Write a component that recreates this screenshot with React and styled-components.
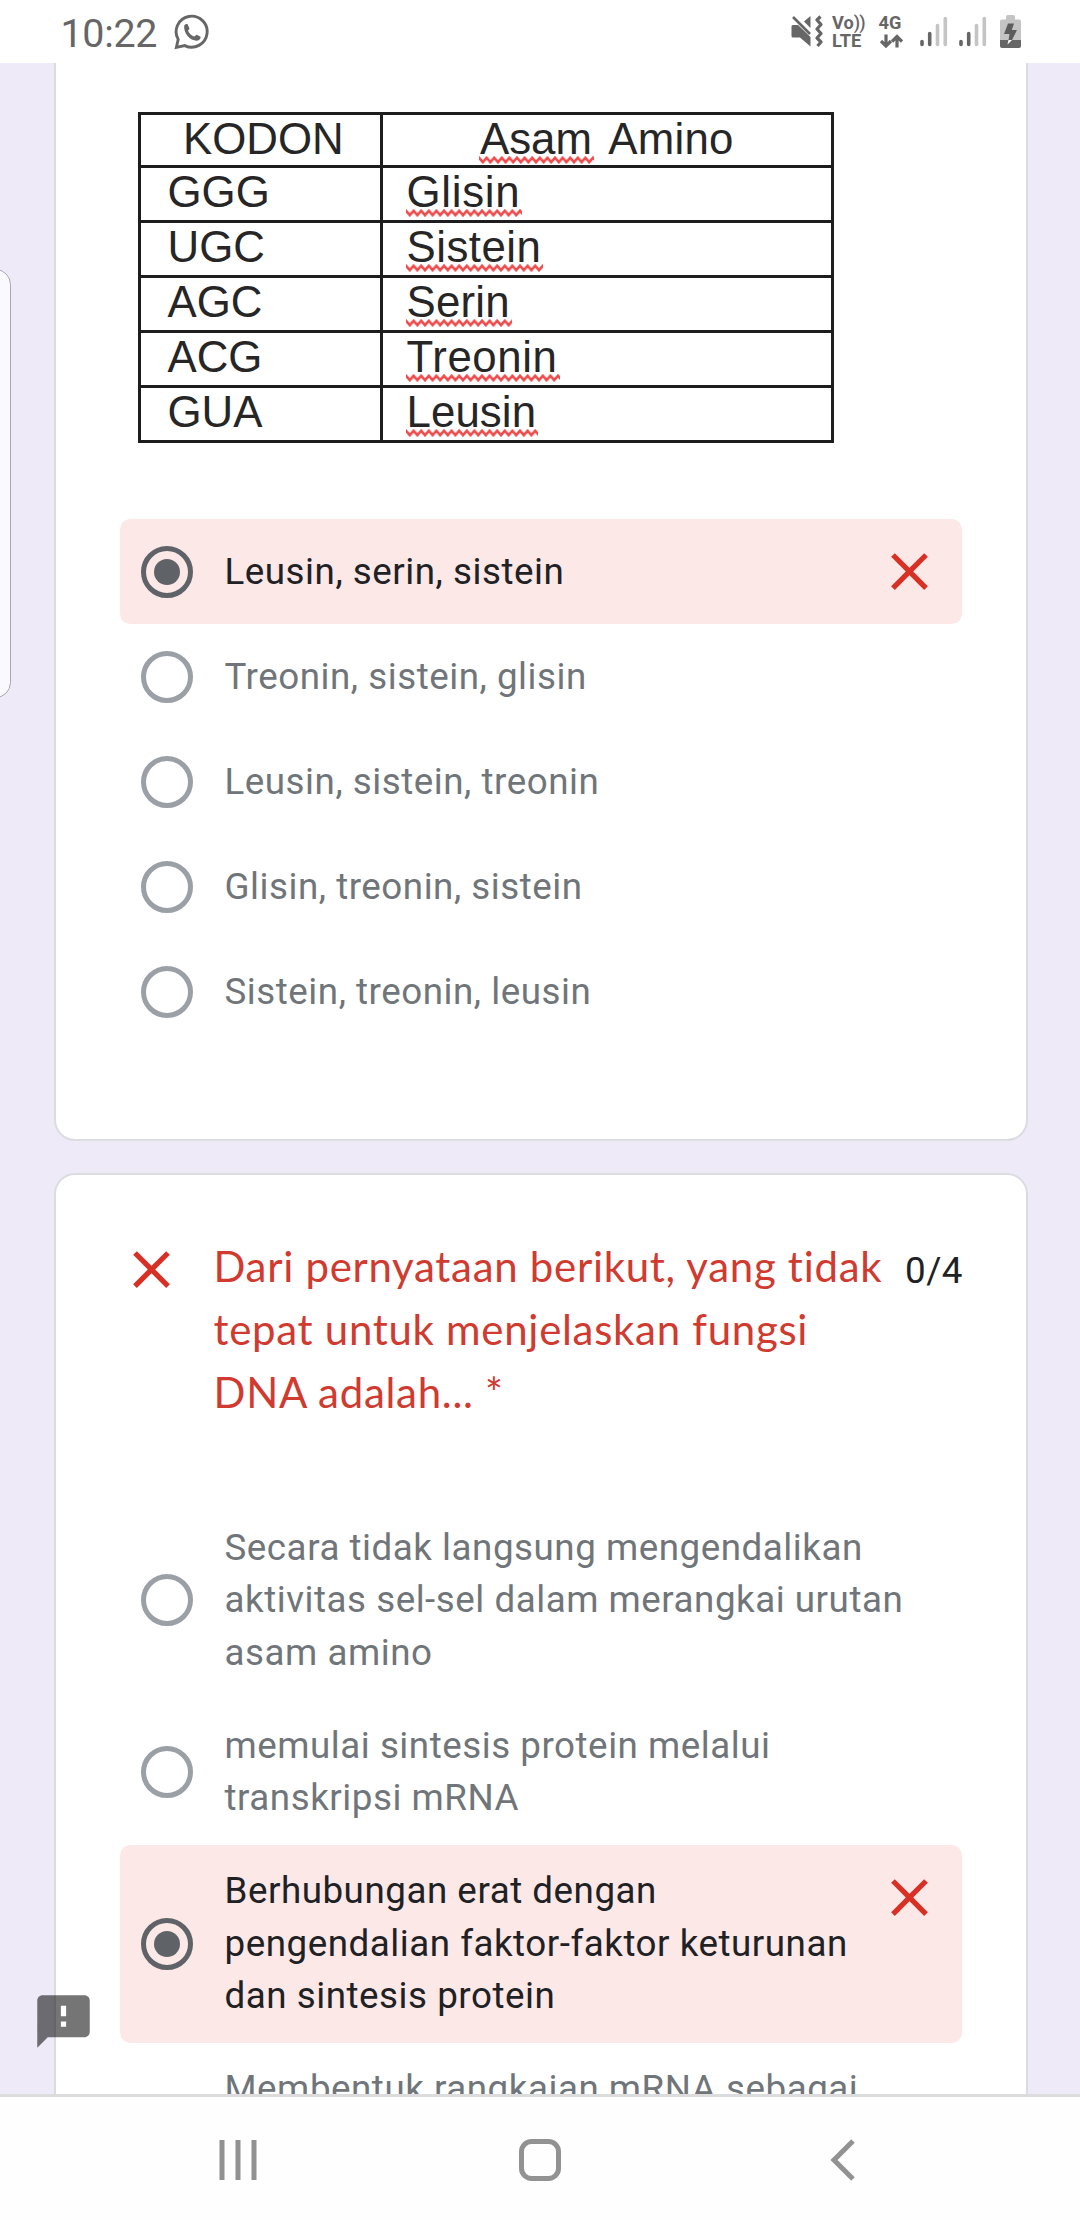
import React from "react";
import styled, { createGlobalStyle } from "styled-components";

const GlobalStyle = createGlobalStyle`
  *, *::before, *::after { box-sizing: border-box; }
  body { margin: 0; background: #fff; }
`;

const Screen = styled.div`
  width: 1080px;
  height: 2220px;
  display: flex;
  flex-direction: column;
  overflow: hidden;
  background: #fff;
  font-family: Roboto, "Liberation Sans", sans-serif;
`;

const StatusBar = styled.header`
  flex: none;
  height: 63px;
  display: flex;
  align-items: center;
  justify-content: space-between;
  padding: 0 59.5px 0 60.5px;
  color: #666;
  background: #fff;
`;

const StatusGroup = styled.div`
  display: flex;
  align-items: center;
`;

const StatusSlot = styled.div`
  display: flex;
  width: ${(p) => p.$width}px;
  margin-left: ${(p) => p.$before || 0}px;
`;

const Clock = styled.time`
  font-size: 39.4px;
  line-height: 63px;
  letter-spacing: -0.3px;
  padding-top: 3px;
`;

const NetLabel = styled.div`
  display: flex;
  flex-direction: column;
  font-size: 18.2px;
  font-weight: 700;
  line-height: 18px;
  white-space: nowrap;
`;

const Waves = styled.span`
  font-weight: 500;
  letter-spacing: -0.8px;
`;

const Viewport = styled.main`
  position: relative;
  flex: 1;
  min-height: 0;
  overflow: hidden;
  background: #eeeaf8;
  padding: 0 52px 0 54px;
  display: flex;
  flex-direction: column;
  gap: 32px;
`;

const Card = styled.section`
  flex: none;
  background: #fff;
  border: 2px solid #dadce0;
  border-radius: 21px;
  padding: 61px 64px 95px;
`;

const ScrolledCard = styled(Card)`
  border-top: 0;
  border-radius: 0 0 21px 21px;
  padding-top: 49px;
`;

const CodonTable = styled.div`
  display: grid;
  grid-template-columns: 242px 451px;
  width: 696px;
  margin-left: 18px;
  margin-bottom: 76px;
  border-top: 3px solid #1d1d1d;
  border-left: 3px solid #1d1d1d;
  font: 43.8px/46px "Liberation Sans", Arial, sans-serif;
  color: #262626;
`;

const Cell = styled.div`
  height: ${(p) => (p.$head ? 53 : 55)}px;
  padding: 1px 0 0 ${(p) => p.$indent}px;
  border-right: 3px solid #1d1d1d;
  border-bottom: 3px solid #1d1d1d;
  white-space: pre;
`;

const HeadWord = styled.span`
  margin-left: 4px;
  letter-spacing: 0.3px;
`;

const Misspelt = styled.span`
  position: relative;
  display: inline-block;
  letter-spacing: ${(p) => p.$track}px;
`;

const Squiggle = styled.svg`
  position: absolute;
  left: -1px;
  top: 39.5px;
  width: calc(100% + 3px);
  height: 8px;
`;

const OptionList = styled.div`
  display: flex;
  flex-direction: column;
`;

const OptionRow = styled.label`
  display: flex;
  align-items: center;
  min-height: ${(p) => (p.$tall ? 198 : 105)}px;
  padding: 20.25px 21px;
  border-radius: 10.5px;
  background: ${(p) => (p.$wrong ? "#fce8e6" : "transparent")};
  color: ${(p) => (p.$wrong ? "#202124" : "#70757a")};
`;

const Radio = styled.span`
  flex: none;
  width: 52px;
  height: 52px;
  border: 5.25px solid ${(p) => (p.$checked ? "#5f6368" : "#9aa0a6")};
  border-radius: 50%;
  display: grid;
  place-items: center;

  &::after {
    content: "";
    width: 26px;
    height: 26px;
    border-radius: 50%;
    background: ${(p) => (p.$checked ? "#5f6368" : "transparent")};
  }
`;

const OptionText = styled.span`
  flex: 1;
  align-self: ${(p) => (p.$tall ? "flex-start" : "center")};
  margin: 0.5px 0 -0.5px 31.5px;
  font-size: 36.75px;
  line-height: 52.5px;
  letter-spacing: 0.525px;
  white-space: pre-line;
`;

const CrossIcon = styled.svg`
  flex: none;
  width: 63px;
  height: 63px;
  fill: #d93025;
`;

const RowCross = styled(CrossIcon)`
  align-self: flex-start;
  margin-top: 0.75px;
`;

const QuestionHeader = styled.div`
  display: flex;
  align-items: flex-start;
  margin-bottom: 76px;

  ${CrossIcon} { margin-top: 2px; }
`;

const QuestionTitle = styled.h2`
  flex: 1;
  margin: -1px 0 1px 30.5px;
  font: 400 42px/63px Lato, Roboto, sans-serif;
  letter-spacing: 0.7px;
  color: #d03a2f;
  white-space: pre;
`;

const Score = styled.span`
  margin: 9px -1px 0 0;
  font-size: 36.75px;
  line-height: 52.5px;
  letter-spacing: 0.5px;
  color: #202124;
`;

const EdgePanel = styled.div`
  position: absolute;
  left: -20px;
  top: 206px;
  width: 31px;
  height: 429px;
  background: #faf9ff;
  border: 1.5px solid #a9a8ac;
  border-radius: 16px;
`;

const FeedbackIcon = styled.svg`
  position: absolute;
  left: 31.75px;
  top: 1926.75px;
  width: 63px;
  height: 63px;
  fill: rgba(0, 0, 0, 0.54);
`;

const NavBar = styled.nav`
  flex: none;
  height: 126px;
  border-top: 3px solid #dcdcdc;
  background: #fefefe;
  display: flex;
  align-items: center;
  justify-content: space-between;
  padding: 2px 213px 0;
`;

const NavIcon = styled.svg`
  width: 50px;
  height: 50px;
  fill: none;
  stroke: #929292;
  stroke-width: 5;
`;

const Cross = ({ as: Icon = CrossIcon }) => (
  <Icon viewBox="0 0 24 24">
    <path d="M19 6.41L17.59 5 12 10.59 6.41 5 5 6.41 10.59 12 5 17.59 6.41 19 12 13.41 17.59 19 19 17.59 13.41 12z" />
  </Icon>
);

const Flagged = ({ id, track = 0, children }) => (
  <Misspelt $track={track}>
    {children}
    <Squiggle>
      <defs>
        <pattern id={id} width="7.6" height="8" patternUnits="userSpaceOnUse">
          <path d="M-1.9 4 L0 1.8 L3.8 6.2 L7.6 1.8 L9.5 4" fill="none" stroke="#f14c4c" strokeWidth="2.6" />
        </pattern>
      </defs>
      <rect width="100%" height="8" fill={`url(#${id})`} />
    </Squiggle>
  </Misspelt>
);

const Option = ({ text, wrong, tall }) => (
  <OptionRow $wrong={wrong} $tall={tall}>
    <Radio $checked={wrong} />
    <OptionText $tall={tall}>{text}</OptionText>
    {wrong && <Cross as={RowCross} />}
  </OptionRow>
);

const WhatsAppIcon = () => (
  <svg width="36" height="36" viewBox="0 0 36 36" fill="none">
    <path d="M2.400 33.300 L4.200 25.400 A15.500 15.500 0 1 1 10.800 31.600 Z" stroke="#666" strokeWidth="2.900" />
    <path d="M10.200 11.600 C11 10 12.600 9.600 13.600 10.200 L15.400 14.200 C15.600 15 14 16.200 14 16.800 C15 19.400 17.400 21.600 20 22.600 C21 22.600 21.800 20.800 22.800 20.800 L26.600 22.800 C27 24.400 25.400 26.400 23 26.800 C16.600 27.200 9.200 19.400 10.200 11.600 Z" fill="#666" />
  </svg>
);

const MuteIcon = () => (
  <svg width="32" height="33" viewBox="0 0 32 33" fill="#666">
    <path d="M0.500 11.500 Q0.500 10 2 10 H7 L19.500 22 V31.500 L9 22.500 H2 Q0.500 22.500 0.500 21 Z" />
    <path d="M13 6.500 L19.500 1 V13 Z" />
    <path d="M2 2 L19 19" stroke="#666" strokeWidth="2.600" />
    <path d="M29.500 1.500 L26 5 L30 9.500 L26 14 L30 18.500 L26 23 L30 27 L26.500 31" fill="none" stroke="#666" strokeWidth="3.200" strokeLinejoin="round" />
  </svg>
);

const SignalIcon = () => (
  <svg width="28" height="31" viewBox="0 0 28 31" strokeWidth="3.600" strokeLinecap="round">
    <path d="M2 25.500 V28.500 M9.700 17.500 V28.500" stroke="#666" />
    <path d="M17.500 9.500 V28.500 M25.300 2.500 V28.500" stroke="#c4c4c4" />
  </svg>
);

const BatteryIcon = () => (
  <svg width="21" height="33" viewBox="0 0 21 33">
    <path d="M6 2 Q6 0 8 0 H13 Q15 0 15 2 V4.500 H19 Q21 4.500 21 6.500 V25 H0 V6.500 Q0 4.500 2 4.500 H6 Z" fill="#c4c4c4" />
    <path d="M0 25 H21 V31 Q21 33 19 33 H2 Q0 33 0 31 Z" fill="#666" />
    <path d="M8 8.500 H14 L11.800 15 H17 L12 25 H8.500 L9.500 19 H4 Z" fill="#5c5c5c" />
    <path d="M8.500 25 H12 L7.500 29.500 Z" fill="#fff" />
  </svg>
);

const codons = [
  { codon: "GGG", acid: "Glisin", track: 0.7 },
  { codon: "UGC", acid: "Sistein", track: 0.5 },
  { codon: "AGC", acid: "Serin", track: 0.2 },
  { codon: "ACG", acid: "Treonin", track: 0.6 },
  { codon: "GUA", acid: "Leusin", track: 0.1 },
];

const firstOptions = [
  { text: "Leusin, serin, sistein", wrong: true },
  { text: "Treonin, sistein, glisin" },
  { text: "Leusin, sistein, treonin" },
  { text: "Glisin, treonin, sistein" },
  { text: "Sistein, treonin, leusin" },
];

const secondOptions = [
  { text: "Secara tidak langsung mengendalikan\naktivitas sel-sel dalam merangkai urutan\nasam amino" },
  { text: "memulai sintesis protein melalui\ntranskripsi mRNA" },
  { text: "Berhubungan erat dengan\npengendalian faktor-faktor keturunan\ndan sintesis protein", wrong: true },
  { text: "Membentuk rangkaian mRNA sebagai", tall: true },
];

export default function App() {
  return (
    <Screen>
      <GlobalStyle />
      <StatusBar>
        <StatusGroup>
          <Clock>10:22</Clock>
          <StatusSlot $width={36} $before={17}><WhatsAppIcon /></StatusSlot>
        </StatusGroup>
        <StatusGroup>
          <StatusSlot $width={32}><MuteIcon /></StatusSlot>
          <StatusSlot $width={32} $before={9.5}>
            <NetLabel>
              <span>Vo<Waves>))</Waves></span>
              <span>LTE</span>
            </NetLabel>
          </StatusSlot>
          <StatusSlot $width={24} $before={14.5}>
            <NetLabel>
              <span>4G</span>
              <svg width="24" height="18" viewBox="0 0 24 18" fill="none" stroke="#666" strokeWidth="3.200">
                <path d="M7 2.500 V13 M2 9 L7 14 L12 9 M18 15.500 V5 M13 9.500 L18 4.500 L23 9.500" />
              </svg>
            </NetLabel>
          </StatusSlot>
          <StatusSlot $width={28} $before={17}><SignalIcon /></StatusSlot>
          <StatusSlot $width={28} $before={11}><SignalIcon /></StatusSlot>
          <StatusSlot $width={21} $before={13}><BatteryIcon /></StatusSlot>
        </StatusGroup>
      </StatusBar>

      <Viewport>
        <ScrolledCard>
          <CodonTable>
            <Cell $head $indent={42}>KODON</Cell>
            <Cell $head $indent={97}>
              <Flagged id="sq-asam">Asam</Flagged> <HeadWord>Amino</HeadWord>
            </Cell>
            {codons.map(({ codon, acid, track }) => (
              <React.Fragment key={codon}>
                <Cell $indent={26.5}>{codon}</Cell>
                <Cell $indent={23.5}><Flagged id={`sq-${codon}`} track={track}>{acid}</Flagged></Cell>
              </React.Fragment>
            ))}
          </CodonTable>
          <OptionList>
            {firstOptions.map((o) => <Option key={o.text} {...o} />)}
          </OptionList>
        </ScrolledCard>

        <Card>
          <QuestionHeader>
            <Cross />
            <QuestionTitle>{"Dari pernyataan berikut, yang tidak\ntepat untuk menjelaskan fungsi\nDNA adalah... *"}</QuestionTitle>
            <Score>0/4</Score>
          </QuestionHeader>
          <OptionList>
            {secondOptions.map((o) => <Option key={o.text} {...o} />)}
          </OptionList>
        </Card>

        <EdgePanel />
        <FeedbackIcon viewBox="0 0 24 24">
          <path d="M20 2H4c-1.100 0-1.990.9-1.990 2L2 22l4-4h14c1.100 0 2-.9 2-2V4c0-1.100-.9-2-2-2zm-7 12h-2v-2h2v2zm0-4h-2V6h2v4z" />
        </FeedbackIcon>
      </Viewport>

      <NavBar>
        <NavIcon viewBox="0 0 50 50"><path d="M9 5 V45 M25 5 V45 M41 5 V45" /></NavIcon>
        <NavIcon viewBox="0 0 50 50"><rect x="6.500" y="6.500" width="37" height="37" rx="10" /></NavIcon>
        <NavIcon viewBox="0 0 50 50"><path d="M36 6 L17 25 L36 44" /></NavIcon>
      </NavBar>
    </Screen>
  );
}
